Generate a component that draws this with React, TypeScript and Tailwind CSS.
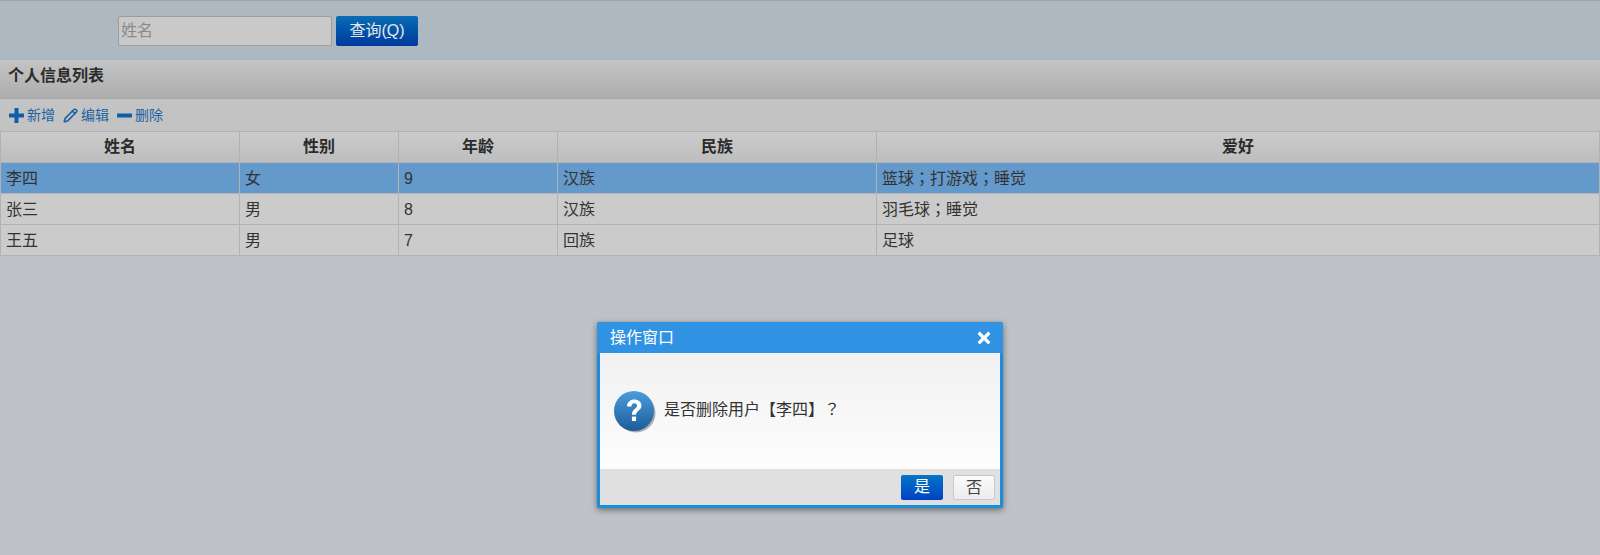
import { Pencil } from "lucide-react";
import { FaTimes } from "react-icons/fa";

const font = { fontFamily: '"Liberation Sans", "Noto Sans CJK SC", sans-serif' };
// the reference draws its full-width punctuation centred in the cell
const punct = { fontFamily: '"Noto Sans CJK TC", sans-serif' };

const rows = [
  { name: "李四", sex: "女", age: "9", nation: "汉族", hobby: ["篮球", "打游戏", "睡觉"], selected: true },
  { name: "张三", sex: "男", age: "8", nation: "汉族", hobby: ["羽毛球", "睡觉"], selected: false },
  { name: "王五", sex: "男", age: "7", nation: "回族", hobby: ["足球"], selected: false },
];

const heads = ["姓名", "性别", "年龄", "民族", "爱好"];

const App = () => {
  return (
    <div className="relative h-[555px] overflow-hidden bg-[#bec2c6] text-[16px] text-[#2b2b2b]" style={font}>
      {/* Search */}
      <div className="flex h-[60px] items-start gap-1 border-t border-[#9fa4a8] bg-[#aeb8c0] pt-[15px] pl-[118px]">
        <input
          placeholder="姓名"
          className="h-[30px] w-[214px] rounded-[2px] border border-[#9d9d9d] bg-[#c9c9c9] px-[2px] text-[16px] placeholder:text-[#8a8a8a]"
        />
        <button className="h-[30px] w-[82px] rounded-[2px] bg-gradient-to-b from-[#0d6cb4] to-[#00399e] text-[16px] text-[#e6e6e6]">
          查询(<span className="underline">Q</span>)
        </button>
      </div>

      {/* Title */}
      <div className="flex h-[39px] items-start border-b border-[#a8a8a8] bg-gradient-to-b from-[#c4c4c4] to-[#adadad] pt-[4px] pl-2 font-bold">
        个人信息列表
      </div>

      {/* Toolbar */}
      <div className="flex h-[32px] items-center bg-[#c3c3c3] pl-[9px] text-[14px] text-[#1d62a4]">
        <svg width="15" height="15" viewBox="0 0 15 15" className="text-[#0f5fa8]">
          <path d="M5.5 0h4v5.5H15v4H9.500V15h-4V9.500H0v-4h5.500z" fill="currentColor" />
        </svg>
        <span className="ml-[3px]">新增</span>
        <Pencil size={15} strokeWidth={2.6} className="ml-[8px] text-[#1d62a4]" />
        <span className="ml-[3px]">编辑</span>
        <svg width="15" height="15" viewBox="0 0 15 15" className="ml-[8px] text-[#0f5fa8]">
          <rect x="0" y="5.500" width="15" height="4" fill="currentColor" />
        </svg>
        <span className="ml-[3px]">删除</span>
      </div>

      {/* Table */}
      <table className="w-[1600px] table-fixed border-collapse">
        <colgroup>
          <col className="w-[239px]" />
          <col className="w-[159px]" />
          <col className="w-[159px]" />
          <col className="w-[319px]" />
          <col />
        </colgroup>
        <thead>
          <tr className="h-[31px] bg-gradient-to-b from-[#cbcbcb] to-[#bdbdbd]">
            {heads.map((h) => (
              <th key={h} className="border border-[#b2b2b2] p-0 text-center font-bold">
                {h}
              </th>
            ))}
          </tr>
        </thead>
        <tbody>
          {rows.map((r) => (
            <tr key={r.name} className={`h-[31px] ${r.selected ? "bg-[#6499cb]" : "bg-[#cbcbcb]"}`}>
              {[r.name, r.sex, r.age, r.nation].map((v, i) => (
                <td key={i} className="border border-[#b2b2b2] px-[5px] pt-px pb-0 text-left text-[#333]">
                  {v}
                </td>
              ))}
              <td className="border border-[#b2b2b2] px-[5px] pt-px pb-0 text-left text-[#333]">
                {r.hobby.map((h, i) => (
                  <span key={h}>
                    {i > 0 && (
                      <span className="leading-none" style={punct}>
                        ；
                      </span>
                    )}
                    {h}
                  </span>
                ))}
              </td>
            </tr>
          ))}
        </tbody>
      </table>

      {/* Dialog */}
      <div className="absolute top-[322px] left-[597px] w-[406px] rounded-[2px] border-x-[3px] border-b-[3px] border-[#1a8ddb] shadow-[0_2px_6px_rgba(0,0,0,0.45)]">
        <div className="-mx-[3px] flex h-[31px] items-center justify-between rounded-t-[2px] bg-[#3092e2] pr-[10px] pl-[13px] text-white">
          <span className="pt-px">操作窗口</span>
          <FaTimes size={18} />
        </div>
        <div className="flex h-[116px] items-center bg-gradient-to-b from-[#f1f1f1] to-[#fdfdfd] pl-[14px]">
          <svg width="42" height="42" viewBox="0 0 42 42" className="mt-[2px] shrink-0">
            <defs>
              <linearGradient id="q" x1="0" y1="0" x2="0" y2="1">
                <stop offset="0" stopColor="#4a9ddd" />
                <stop offset="1" stopColor="#1c5c97" />
              </linearGradient>
            </defs>
            <circle cx="22" cy="22" r="19.5" fill="#000" opacity="0.3" />
            <circle cx="20" cy="20" r="20" fill="url(#q)" />
            <path
              d="M13 15.500c0-4.300 3.200-7 7.300-7s7.200 2.500 7.200 6.200c0 4.700-5.400 5-5.400 9h-4.200c0-5.700 5.200-6 5.200-8.900 0-1.500-1.100-2.500-2.700-2.500-1.800 0-2.900 1.200-3 3.200z"
              fill="#fff"
            />
            <rect x="17.900" y="25.600" width="4.200" height="4.400" fill="#fff" />
          </svg>
          <span className="-mt-[2px] ml-[8px] text-[#333]">
            是否删除用户
            <span className="leading-none" style={punct}>【</span>李四<span className="leading-none" style={punct}>】？</span>
          </span>
        </div>
        <div className="flex h-[36px] items-center justify-end gap-[10px] bg-[#e0e0e0] pr-[5px]">
          <button className="h-[25px] w-[42px] rounded-[2px] bg-gradient-to-b from-[#0c75c4] to-[#0040c4] text-[16px] text-white">
            是
          </button>
          <button className="h-[25px] w-[42px] rounded-[2px] border border-[#c9c9c9] bg-gradient-to-b from-[#fafafa] to-[#ececec] text-[16px] text-[#444]">
            否
          </button>
        </div>
      </div>
    </div>
  );
};

export default App;
